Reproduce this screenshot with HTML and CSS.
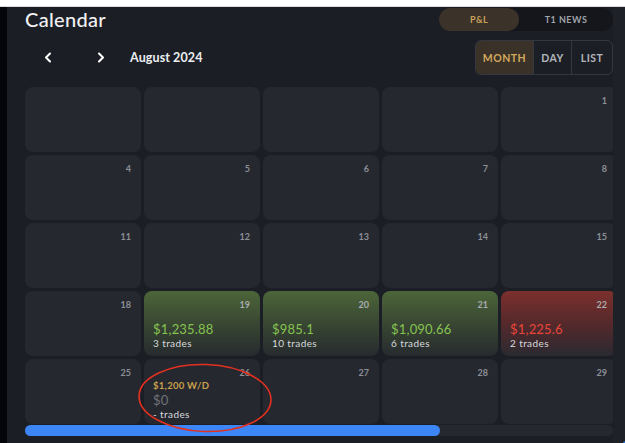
FILE: index.html
```html
<!DOCTYPE html>
<html lang="en">
<head>
    <meta charset="UTF-8">
    <meta name="viewport" content="width=device-width, initial-scale=1.0">
    <title>Calendar</title>
    <link rel="stylesheet" href="styles.css">
</head>
<body>
    <div class="topbar"></div>

    <div class="app">
        <div class="sidebar"></div>

        <main class="main">
            <header class="head">
                <h1>Calendar</h1>
                <div class="toggle">
                    <button class="toggle-btn active">P&amp;L</button>
                    <button class="toggle-btn">T1 NEWS</button>
                </div>
            </header>

            <div class="nav">
                <div class="month-nav">
                    <button class="arrow" aria-label="Previous month">
                        <svg width="8" height="11" viewBox="0 0 8 11"><path d="M6 1.5 2 5.5l4 4" fill="none" stroke="#fff" stroke-width="2" stroke-linecap="round" stroke-linejoin="round"/></svg>
                    </button>
                    <button class="arrow" aria-label="Next month">
                        <svg width="8" height="11" viewBox="0 0 8 11"><path d="M2 1.5l4 4-4 4" fill="none" stroke="#fff" stroke-width="2" stroke-linecap="round" stroke-linejoin="round"/></svg>
                    </button>
                    <span class="month-label">August 2024</span>
                </div>
                <div class="views">
                    <button class="view active">MONTH</button>
                    <button class="view">DAY</button>
                    <button class="view">LIST</button>
                </div>
            </div>

            <section class="calendar">
                <div class="grid-scroll">
                    <div class="grid" id="grid"></div>
                </div>
                <div class="scrollbar"><div class="thumb"></div></div>

                <!-- highlight drawn over day 26 -->
                <svg class="circle-mark" width="136" height="72" viewBox="0 0 136 72">
                    <ellipse cx="68" cy="36" rx="66" ry="33.5" fill="none" stroke="#e3301f" stroke-width="1.6" transform="rotate(2 68 36)"/>
                </svg>
            </section>
        </main>

        <div class="chat-bubble"></div>
    </div>

    <script>
        // Days with trading results
        const results = {
            19: { amount: '$1,235.88', trades: '3 trades', kind: 'win' },
            20: { amount: '$985.1', trades: '10 trades', kind: 'win' },
            21: { amount: '$1,090.66', trades: '6 trades', kind: 'win' },
            22: { amount: '$1,225.6', trades: '2 trades', kind: 'loss' },
            26: { withdraw: '$1,200 W/D', amount: '$0', trades: '- trades', kind: 'flat' }
        };

        function buildMonth() {
            const grid = document.getElementById('grid');
            const firstDay = 4; // August 1st 2024 is a Thursday
            const total = 31;
            const cells = 35;

            for (let i = 0; i < cells; i++) {
                const day = i - firstDay + 1;
                const cell = document.createElement('div');
                cell.className = 'day';

                if (day >= 1 && day <= total) {
                    const r = results[day];
                    if (r) cell.classList.add(r.kind);
                    let html = `<span class="num">${day}</span>`;
                    if (r) {
                        html += '<div class="stats">';
                        if (r.withdraw) html += `<div class="withdraw">${r.withdraw}</div>`;
                        html += `<div class="amount">${r.amount}</div>`;
                        html += `<div class="trades">${r.trades}</div>`;
                        html += '</div>';
                    }
                    cell.innerHTML = html;
                }
                grid.appendChild(cell);
            }
        }

        buildMonth();
    </script>
</body>
</html>
```

FILE: styles.css
```css
* {
    box-sizing: border-box;
}
body {
    margin: 0;
    background-color: #ffffff;
    font-family: Lato, "Noto Sans", sans-serif;
    overflow: hidden;
    height: 443px;
}
button {
    font-family: inherit;
    border: none;
    background: none;
    cursor: pointer;
    padding: 0;
}
.topbar {
    height: 7px;
    background-color: #ffffff;
    border-bottom: 1px solid #dcdcdc;
}
.app {
    display: flex;
    position: relative;
    height: 436px;
    overflow: hidden;
}
.sidebar {
    width: 7px;
    flex-shrink: 0;
    background-color: #04050a;
}
.main {
    flex: 1;
    min-width: 0;
    background-color: #1c1e25;
    padding: 0 12px 0 18px;
    box-shadow: inset -12px 0 0 #1f2129;
}

/* Header */
.head {
    display: flex;
    justify-content: space-between;
    align-items: flex-start;
    height: 24px;
}
.head h1 {
    margin: 1px 0 0;
    font-size: 20px;
    line-height: 22px;
    font-weight: 500;
    color: #f1f1f3;
    letter-spacing: 0.3px;
}
.toggle {
    display: flex;
    margin-top: 1px;
    background-color: #15161b;
    border-radius: 12px;
    height: 23px;
}
.toggle-btn {
    height: 23px;
    border-radius: 12px;
    font-size: 9px;
    font-weight: 700;
    letter-spacing: 0.5px;
    color: #9fa3aa;
}
.toggle-btn.active {
    width: 80px;
    background-color: #3b3229;
    color: #c9a25c;
}
.toggle-btn:last-child {
    width: 94px;
}

/* Month navigation */
.nav {
    display: flex;
    justify-content: space-between;
    align-items: center;
    margin-top: 9px;
    height: 35px;
}
.month-nav {
    display: flex;
    align-items: center;
}
.arrow {
    display: flex;
    width: 14px;
    justify-content: center;
    margin-left: 16px;
}
.arrow + .arrow {
    margin-left: 39px;
}
.month-label {
    margin-left: 22px;
    font-size: 12.5px;
    font-weight: 700;
    color: #eceef1;
    letter-spacing: 0.1px;
}
.views {
    display: flex;
    height: 35px;
    border: 1px solid #343740;
    border-radius: 6px;
    overflow: hidden;
}
.view {
    font-size: 10.5px;
    font-weight: 700;
    letter-spacing: 0.5px;
    color: #b3b6bc;
    border-left: 1px solid #343740;
}
.view:first-child {
    border-left: none;
}
.view.active {
    width: 57px;
    background-color: #3a3229;
    color: #d3a85c;
}
.view:nth-child(2) {
    width: 38px;
}
.view:nth-child(3) {
    width: 41px;
}

/* Calendar grid */
.calendar {
    position: relative;
    margin-top: 12px;
}
.grid-scroll {
    overflow: hidden;
}
.grid {
    display: grid;
    grid-template-columns: repeat(7, 116px);
    grid-auto-rows: 65px;
    gap: 3px;
    width: 830px;
}
.day {
    display: flex;
    flex-direction: column;
    background-color: #262830;
    border-radius: 8px;
    padding: 8px 10px 6px 9px;
}
.num {
    align-self: flex-end;
    font-size: 9px;
    line-height: 12px;
    font-weight: 700;
    color: #8c8f96;
}
.stats {
    margin-top: auto;
}
.withdraw {
    font-size: 9.5px;
    line-height: 14px;
    font-weight: 700;
    color: #c9a04c;
    letter-spacing: 0.3px;
}
.amount {
    font-size: 13px;
    line-height: 14px;
    letter-spacing: 0.2px;
}
.trades {
    font-size: 10px;
    line-height: 14px;
    color: #d9dadd;
    letter-spacing: 0.4px;
}
.day.win {
    background: linear-gradient(180deg, #4c6539 0%, #3b4a33 45%, #262a2e 100%);
}
.day.win .amount {
    color: #86c350;
}
.day.loss {
    background: linear-gradient(180deg, #7c302d 0%, #55292b 50%, #2a2a31 100%);
}
.day.loss .amount {
    color: #ea453a;
}
.day.win .num,
.day.loss .num {
    color: #a9acb0;
}
.day.flat .amount {
    color: #6f7279;
}

.scrollbar {
    margin-top: 1px;
    height: 11px;
    background-color: #262830;
    border-radius: 6px;
}
.thumb {
    width: 415px;
    height: 11px;
    background-color: #3d86f7;
    border-radius: 6px;
}
.circle-mark {
    position: absolute;
    left: 112px;
    top: 275px;
}
.chat-bubble {
    position: absolute;
    left: 612px;
    top: 430px;
    width: 56px;
    height: 56px;
    border-radius: 50%;
    background-color: #2f7ee6;
}
```
